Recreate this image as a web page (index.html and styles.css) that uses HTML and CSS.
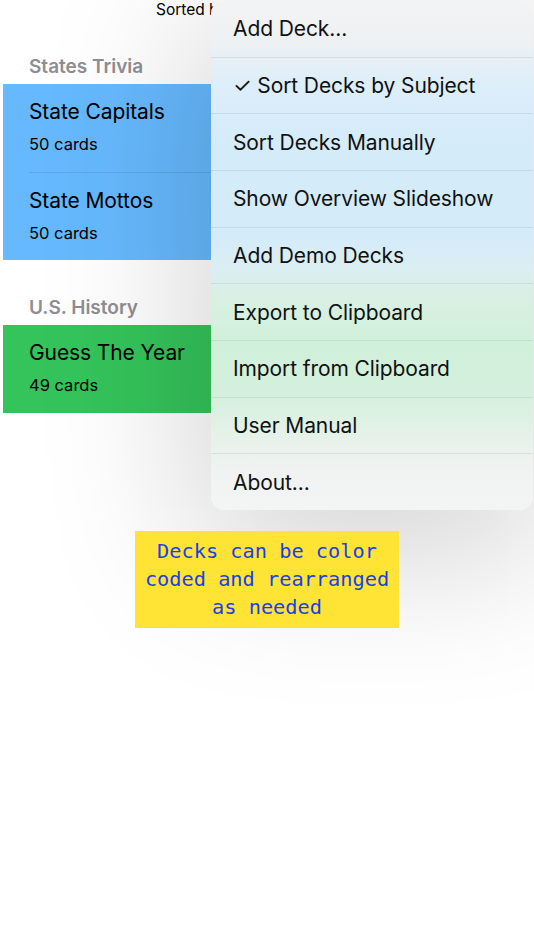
FILE: index.html
```html
<!DOCTYPE html>
<html lang="en">
<head>
<meta charset="utf-8">
<title>Decks</title>
<link rel="stylesheet" href="styles.css">
</head>
<body>
<div class="screen">
  <div class="topbar">Sorted by Subject</div>

  <section class="group">
    <h2 class="group-title">States Trivia</h2>
    <div class="deck-card blue">
      <div class="deck-row">
        <div class="deck-name">State Capitals</div>
        <div class="deck-count">50 cards</div>
      </div>
      <div class="deck-row">
        <div class="deck-name">State Mottos</div>
        <div class="deck-count">50 cards</div>
      </div>
    </div>
  </section>

  <section class="group">
    <h2 class="group-title">U.S. History</h2>
    <div class="deck-card green">
      <div class="deck-row">
        <div class="deck-name">Guess The Year</div>
        <div class="deck-count">49 cards</div>
      </div>
    </div>
  </section>

  <div class="note-wrap">
    <div class="note">Decks can be color coded and rearranged as needed</div>
  </div>

  <nav class="menu">
    <div class="menu-item">Add Deck...</div>
    <div class="menu-item">✓ Sort Decks by Subject</div>
    <div class="menu-item">Sort Decks Manually</div>
    <div class="menu-item">Show Overview Slideshow</div>
    <div class="menu-item">Add Demo Decks</div>
    <div class="menu-item">Export to Clipboard</div>
    <div class="menu-item">Import from Clipboard</div>
    <div class="menu-item">User Manual</div>
    <div class="menu-item">About...</div>
  </nav>
</div>
</body>
</html>
```

FILE: styles.css
```css
* { box-sizing: border-box; }

html, body {
  margin: 0;
  padding: 0;
  background: #ffffff;
}

body {
  font-family: Inter, "Noto Sans", "Liberation Sans", sans-serif;
  color: #000;
}

.screen {
  position: relative;
  width: 534px;
  height: 950px;
  overflow: hidden;
}

.topbar {
  height: 19px;
  padding-left: 156px;
  font-size: 15.5px;
  line-height: 19px;
  white-space: nowrap;
}

.group-title {
  margin: 0;
  padding: 37px 0 6px 29px;
  font-size: 19px;
  line-height: 22px;
  font-weight: 600;
  color: #8e8e93;
}

.deck-card {
  margin: 0 3px;
}

.deck-card.blue { background: #66b9fe; }
.deck-card.green { background: #35c45b; }

.deck-row {
  height: 88px;
  padding: 15px 0 0 26px;
}

.deck-row + .deck-row {
  border-top: 1px solid rgba(0, 0, 0, 0.09);
  margin-left: 26px;
  padding-left: 0;
}

.deck-name {
  font-size: 21px;
  line-height: 25px;
  letter-spacing: -0.1px;
}

.deck-count {
  margin-top: 10px;
  font-size: 16.5px;
  line-height: 20px;
}

.note-wrap {
  display: flex;
  justify-content: center;
  padding-top: 118px;
}

.note {
  position: relative;
  z-index: 3;
  width: 264px;
  padding: 6px 6px 7px;
  background: #ffe335;
  color: #1840ec;
  font-family: "DejaVu Sans Mono", "Liberation Mono", monospace;
  font-size: 20.3px;
  line-height: 28px;
  text-align: center;
}

.menu {
  position: absolute;
  z-index: 2;
  top: 0;
  left: 211px;
  width: 322px;
  height: 510px;
  display: grid;
  grid-template-rows: repeat(9, 1fr);
  border-radius: 14px;
  background: linear-gradient(180deg,
    #f2f3f4 0px,
    #eef1f3 40px,
    #dceef9 85px,
    #d4ebfa 150px,
    #d4ebfa 235px,
    #dbeef3 268px,
    #d8f0e2 300px,
    #d0f0da 345px,
    #d5f0dd 395px,
    #e7f2ea 440px,
    #f1f3f2 475px,
    #f3f4f4 510px);
  box-shadow: 0 30px 150px 20px rgba(0, 0, 0, 0.17);
  overflow: hidden;
}

.menu-item {
  display: flex;
  align-items: center;
  padding-left: 22px;
  font-size: 21px;
  letter-spacing: -0.1px;
  color: #111;
}

.menu-item + .menu-item {
  border-top: 1px solid rgba(0, 30, 60, 0.08);
}
```
